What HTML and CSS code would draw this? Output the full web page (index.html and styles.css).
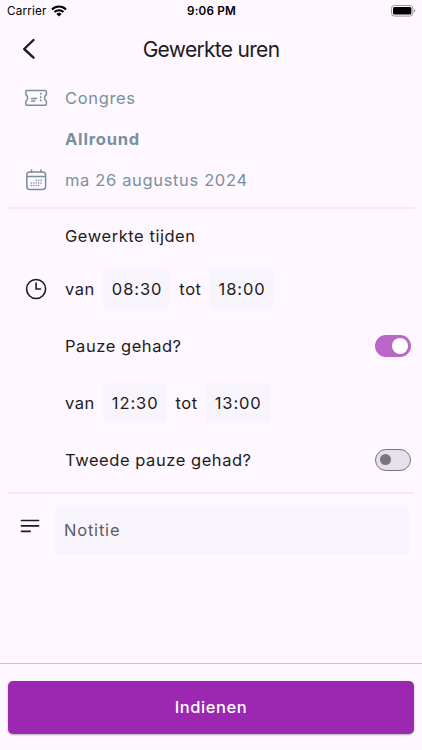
FILE: index.html
```html
<!DOCTYPE html>
<html lang="nl">
<head>
    <meta charset="UTF-8">
    <meta name="viewport" content="width=device-width, initial-scale=1.0">
    <title>Gewerkte uren</title>
    <link rel="stylesheet" href="styles.css">
</head>
<body>
    <div class="status-bar">
        <div class="carrier">
            <span>Carrier</span>
            <svg width="16" height="12" viewBox="0 0 16 12" fill="none" stroke="#000" stroke-width="2.1">
                <path d="M1 4.4a10 10 0 0 1 14 0"/>
                <path d="M3.5 7.1a6.4 6.4 0 0 1 9 0"/>
                <path d="M8 11.6L5.4 9a3.7 3.7 0 0 1 5.2 0z" fill="#000" stroke="none"/>
            </svg>
        </div>
        <span class="clock">9:06 PM</span>
        <svg class="battery" width="25" height="12" viewBox="0 0 25 12">
            <rect x="0.5" y="0.5" width="21.4" height="10.6" rx="3" fill="none" stroke="#9b979c"/>
            <rect x="2" y="2" width="18.4" height="7.6" rx="1.6" fill="#000"/>
            <path d="M23.2 4v3.6a2 2 0 0 0 0-3.6z" fill="#9b979c"/>
        </svg>
    </div>

    <header>
        <svg class="back" width="14" height="22" viewBox="0 0 14 22" fill="none" stroke="#1d1b20" stroke-width="2.4" stroke-linecap="round" stroke-linejoin="round">
            <path d="M11.5 2L2.2 11l9.3 8.7"/>
        </svg>
        <h1>Gewerkte uren</h1>
    </header>

    <main>
        <section class="info">
            <div class="row">
                <svg class="icon" width="24" height="24" viewBox="0 0 24 24" fill="none" stroke="#78909c" stroke-width="1.5" stroke-linecap="round" stroke-linejoin="round">
                    <path d="M3 4.5h18.2q1.2 0 1.2 1.2V8q0 .7-.6 1.1c-1.7 1.7-1.7 4 0 5.6q.6.4.6 1.1v2.2q0 1.2-1.2 1.2H3q-1.2 0-1.2-1.2v-2.2q0-.7.6-1.1c1.7-1.6 1.7-3.9 0-5.6q-.6-.4-.6-1.1V5.7Q1.800 4.500 3 4.500z"/>
                    <path d="M7.500 12.400h5M7.500 14.900h3.200"/>
                    <path d="M16.700 7.600v9.500" stroke-dasharray="0.700 2.500"/>
                </svg>
                <span>Congres</span>
            </div>
            <div class="row"><strong>Allround</strong></div>
            <div class="row">
                <svg class="icon" width="24" height="24" viewBox="0 0 24 24" fill="none" stroke="#78909c" stroke-width="1.500" stroke-linecap="round">
                    <rect x="2.800" y="4" width="18.800" height="17.600" rx="3"/>
                    <path d="M3 8.400h18.400M7.500 2v2.300M16.900 2v2.300"/>
                    <path d="M12.200 12.300h5.200M7.400 14.900h10M7.400 17.500h7.400" stroke-dasharray="0.100 2.300"/>
                </svg>
                <span>ma 26 augustus 2024</span>
            </div>
        </section>

        <section class="hours">
            <div class="row heading">Gewerkte tijden</div>
            <div class="row">
                <svg class="icon" width="24" height="24" viewBox="0 0 24 24" fill="none" stroke="#1d1b20" stroke-width="1.600">
                    <circle cx="12.100" cy="12" r="9.500"/>
                    <path d="M12.100 5.500V12h5"/>
                </svg>
                <span>van</span>
                <button class="time">08:30</button>
                <span>tot</span>
                <button class="time">18:00</button>
            </div>
            <div class="row">
                <span>Pauze gehad?</span>
                <button class="switch on" role="switch" aria-checked="true" aria-label="Pauze gehad?"></button>
            </div>
            <div class="row">
                <span>van</span>
                <button class="time">12:30</button>
                <span>tot</span>
                <button class="time">13:00</button>
            </div>
            <div class="row">
                <span>Tweede pauze gehad?</span>
                <button class="switch" role="switch" aria-checked="false" aria-label="Tweede pauze gehad?"></button>
            </div>
        </section>

        <section class="note">
            <svg width="20" height="16" viewBox="0 0 20 16" fill="none" stroke="#1d1b20" stroke-width="1.700" stroke-linecap="round">
                <path d="M1.500 2.500h17M1.500 7.900h17M1.500 13.300h8.600"/>
            </svg>
            <input type="text" placeholder="Notitie">
        </section>
    </main>

    <footer>
        <button class="submit">Indienen</button>
    </footer>

    <script>
        document.querySelectorAll('.switch').forEach(button => {
            button.addEventListener('click', () => {
                const on = button.classList.toggle('on');
                button.setAttribute('aria-checked', on);
            });
        });
    </script>
</body>
</html>
```
FILE: styles.css
```css
* {
    box-sizing: border-box;
}
body {
    font-family: Inter, sans-serif;
    margin: 0;
    height: 100vh;
    display: flex;
    flex-direction: column;
    background-color: #fef7ff;
    color: #1d1b20;
    font-size: 16.5px;
    letter-spacing: 0.55px;
    overflow: hidden;
}
button, input {
    font: inherit;
    letter-spacing: inherit;
    color: inherit;
    border: none;
    padding: 0;
}
svg {
    display: block;
    flex: none;
}
.status-bar {
    display: grid;
    grid-template-columns: 1fr auto 1fr;
    align-items: center;
    height: 21px;
    padding: 0 6px 0 7px;
    font-size: 11.7px;
    letter-spacing: 0.2px;
    color: #000;
}
.carrier {
    display: flex;
    align-items: center;
    gap: 4px;
}
.clock {
    font-weight: 600;
}
.battery {
    justify-self: end;
}
header {
    display: grid;
    grid-template-columns: 22px 1fr 22px;
    align-items: center;
    height: 56px;
    padding: 0 22px;
}
h1 {
    margin: 0;
    font-size: 21px;
    font-weight: 400;
    letter-spacing: -0.7px;
    text-align: center;
}
main {
    flex: 1;
    padding: 0 8px;
}
.info {
    color: #78909c;
    height: 132px;
    border-bottom: 2px solid #f2ebf4;
    letter-spacing: 0.65px;
}
.row {
    display: flex;
    align-items: center;
    height: 57px;
    padding: 0 3px 0 57px;
}
.info .row {
    height: 41px;
}
.info strong {
    letter-spacing: 0.8px;
}
.row.heading {
    height: 48px;
}
.icon {
    margin-left: -41px;
    margin-right: 17px;
}
.hours {
    height: 285px;
    padding-top: 3px;
    border-bottom: 2px solid #f2ebf4;
}
.time {
    height: 40px;
    margin: 0 9px 0 8px;
    padding: 0 8px 0 9px;
    border-radius: 4px;
    background-color: #f8f4fb;
    letter-spacing: 0.9px;
}
.switch {
    width: 36px;
    height: 22px;
    margin-left: auto;
    padding: 0 4px;
    border: 1.5px solid #79747e;
    border-radius: 11px;
    background-color: #e6e0e9;
    display: flex;
    align-items: center;
}
.switch::before {
    content: "";
    width: 11px;
    height: 11px;
    border-radius: 50%;
    background-color: #79747e;
}
.switch.on {
    justify-content: flex-end;
    padding: 0 3px;
    border: none;
    background-color: #ba68c8;
}
.switch.on::before {
    width: 16px;
    height: 16px;
    background-color: #fff;
}
.note {
    display: flex;
    align-items: flex-start;
    gap: 15px;
    padding: 11px 5px 0 12px;
}
.note svg {
    margin-top: 13px;
}
.note input {
    flex: 1;
    min-width: 0;
    height: 49px;
    padding: 0 9px;
    border-radius: 3px;
    background-color: #f8f4fb;
    letter-spacing: 0.8px;
}
.note input::placeholder {
    color: #605b63;
    opacity: 1;
}
footer {
    height: 87px;
    padding: 17px 8px;
    border-top: 1px solid #cac4d0;
}
.submit {
    display: block;
    width: 100%;
    height: 53px;
    padding-bottom: 2px;
    border-radius: 5px;
    background-color: #9c27b0;
    color: #fff;
    font-weight: 500;
    box-shadow: 0 1px 2px rgba(0, 0, 0, 0.3);
}
```
